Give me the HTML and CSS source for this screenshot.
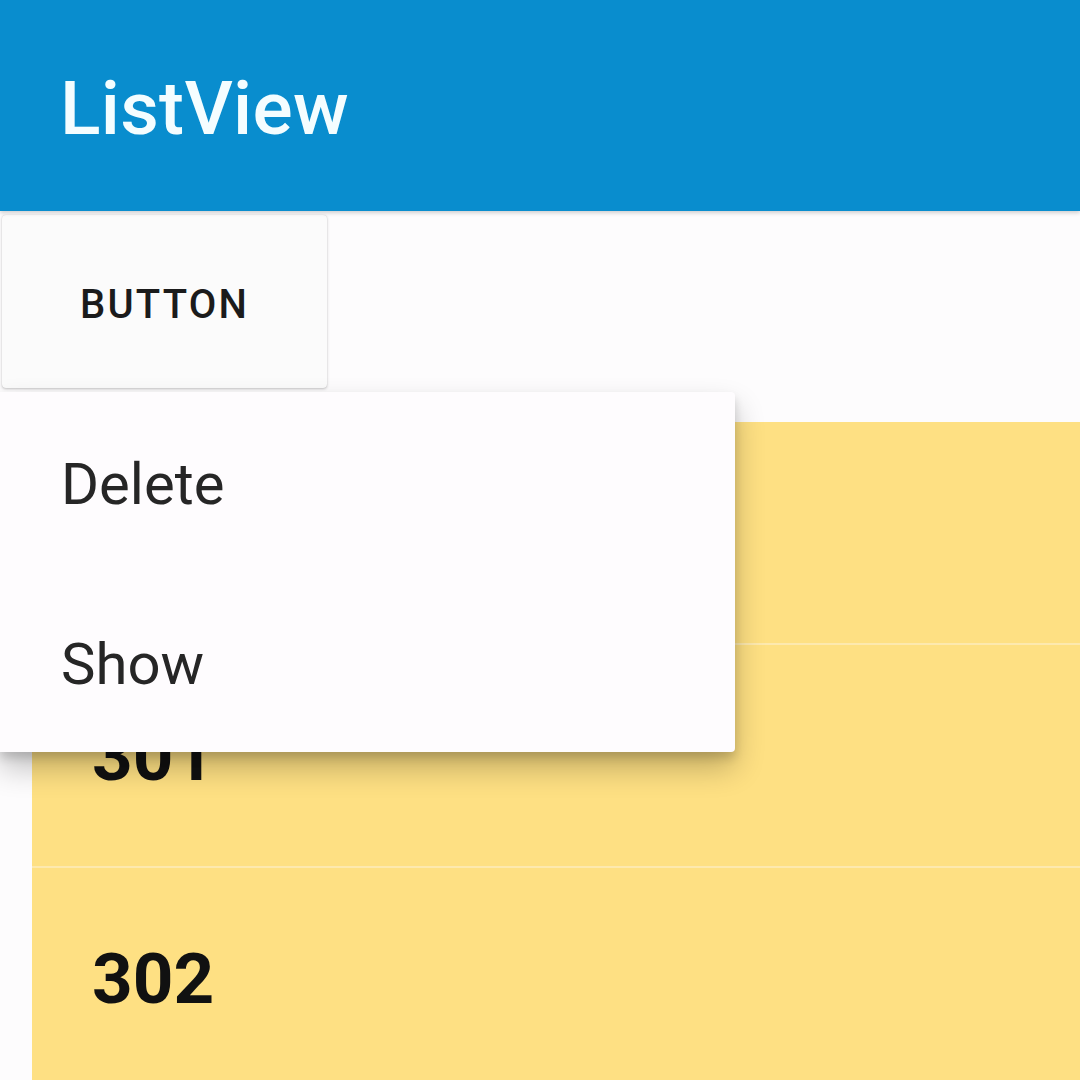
FILE: index.html
```html
<!DOCTYPE html>
<html lang="en">
<head>
<meta charset="utf-8">
<title>ListView</title>
<link rel="stylesheet" href="styles.css">
</head>
<body>
<div class="screen">
  <header class="appbar">
    <h1 class="appbar-title">ListView</h1>
  </header>
  <main class="content">
    <div class="button-row">
      <button class="btn">BUTTON</button>
    </div>
    <ul class="list">
      <li class="list-item"></li>
      <li class="list-item">301</li>
      <li class="list-item">302</li>
    </ul>
    <div class="menu">
      <div class="menu-item">Delete</div>
      <div class="menu-item">Show</div>
    </div>
  </main>
</div>
</body>
</html>
```

FILE: styles.css
```css
html, body {
  margin: 0;
  padding: 0;
  background: #fdfcfd;
}
.screen {
  width: 1080px;
  height: 1080px;
  overflow: hidden;
  display: flex;
  flex-direction: column;
  font-family: Roboto, "Noto Sans", sans-serif;
  background: #fdfcfd;
}
.appbar {
  height: 211px;
  flex: none;
  background: #098dce;
  display: flex;
  align-items: center;
  padding-left: 60px;
  box-sizing: border-box;
  box-shadow: 0 2px 4px rgba(0,0,0,0.18);
  position: relative;
  z-index: 2;
}
.appbar-title {
  margin: 0;
  color: #f4fdff;
  font-size: 75px;
  font-weight: 500;
  letter-spacing: 0.3px;
  padding-top: 4px;
}
.content {
  position: relative;
  flex: 1;
  display: flex;
  flex-direction: column;
}
.button-row {
  padding: 4px 0 0 2px;
  display: flex;
}
.btn {
  width: 325px;
  height: 173px;
  border: none;
  border-radius: 4px;
  background: #fbfbfb;
  box-shadow: 0 1px 3px rgba(0,0,0,0.22), 0 0 1px rgba(0,0,0,0.15);
  font-family: Roboto, "Noto Sans", sans-serif;
  font-size: 40px;
  font-weight: 500;
  letter-spacing: 2.2px;
  color: #1b1b1b;
  padding: 6px 0 0 0;
}
.list {
  list-style: none;
  margin: 34px 0 0 32px;
  padding: 0;
  background: #fee083;
}
.list-item {
  height: 221px;
  display: flex;
  align-items: center;
  padding-left: 60px;
  font-size: 71px;
  font-weight: 700;
  color: #111;
  border-bottom: 2px solid #fde9ae;
}
.menu {
  position: absolute;
  top: 181px;
  left: 0;
  width: 735px;
  background: #fefcfe;
  border-radius: 0 4px 4px 0;
  box-shadow: 0 16px 30px rgba(0,0,0,0.24), 0 6px 10px rgba(0,0,0,0.14);
  display: flex;
  flex-direction: column;
  z-index: 3;
}
.menu-item {
  height: 180px;
  display: flex;
  align-items: center;
  padding-left: 61px;
  padding-top: 4px;
  box-sizing: border-box;
  font-size: 58px;
  color: #262626;
}
```
